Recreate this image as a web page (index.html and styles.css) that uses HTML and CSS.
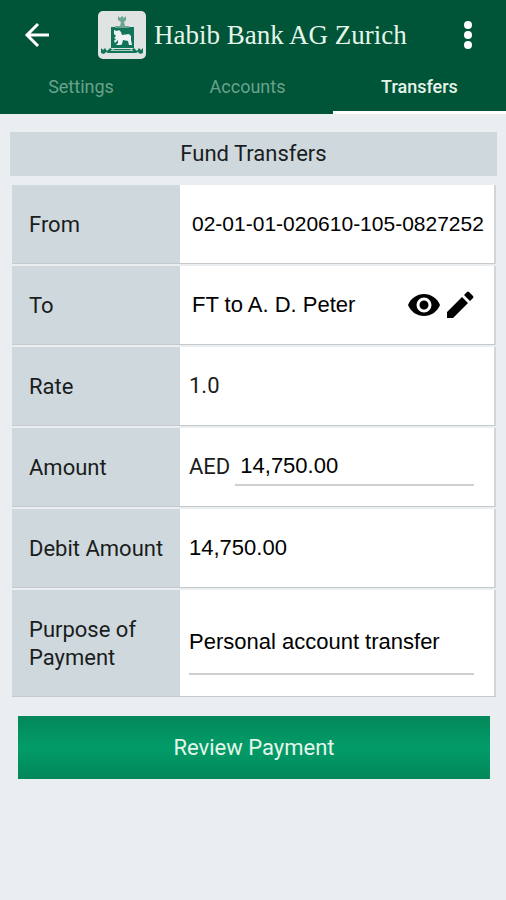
FILE: index.html
```html
<!DOCTYPE html>
<html lang="en">
<head>
<meta charset="utf-8">
<meta name="viewport" content="width=device-width, initial-scale=1">
<title>Fund Transfers</title>
<link rel="stylesheet" href="styles.css">
</head>
<body>
<header class="app-header">
  <div class="app-bar">
    <button class="icon-button back" type="button" aria-label="Back">
      <svg width="26" height="26" viewBox="0 0 26 26" fill="none" stroke="currentColor" stroke-width="3"><path d="M25 13H3M14 2L3 13l11 11"/></svg>
    </button>
    <svg class="logo" width="48" height="48" viewBox="0 0 48 48" aria-hidden="true">
      <rect width="48" height="48" rx="5" fill="#dfe3e2"/>
      <path d="M13 16h23v21H13z" fill="#12755a"/>
      <path d="M3 37l2 2 2-2 2 3 3-3 3 2 1-1h16l1 1 3-2 3 3 2-3 2 2 2-2v5l-3 1-2-2-2 1H10l-2-1-2 2-3-1z" fill="#12755a"/>
      <path d="M13 39.500h22" stroke="#a9cabf" stroke-width="1"/>
      <path d="M20 5l2 2 2-2 2 2 2-2v4l-2 2 1 4h4v2H17v-2h5l1-4-3-2z" fill="#6ba592"/>
      <path d="M16 19l3 1 2-1 2 2 1 3 7-1 2 2v4l1 5h-3l-1-4-5-1-1 4-1 1h-5l2-2v-3l-3 3-1-2 2-2-2-1 2-2-2-2z" fill="#eef3f1"/>
    </svg>
    <h1 class="brand">Habib Bank AG Zurich</h1>
    <button class="icon-button more" type="button" aria-label="More options">
      <svg width="10" height="28" viewBox="0 0 10 28" fill="currentColor"><circle cx="5" cy="4" r="4"/><circle cx="5" cy="14" r="4"/><circle cx="5" cy="24" r="4"/></svg>
    </button>
  </div>
  <nav class="tabs">
    <a class="tab" href="#settings">Settings</a>
    <a class="tab" href="#accounts">Accounts</a>
    <a class="tab active" href="#transfers" aria-current="page">Transfers</a>
  </nav>
</header>
<main class="page">
  <h2 class="page-title">Fund Transfers</h2>
  <form class="transfer">
    <div class="row">
      <span class="label">From</span>
      <div class="value inset account">02-01-01-020610-105-0827252</div>
    </div>
    <div class="row">
      <span class="label">To</span>
      <div class="value inset">
        <span class="grow">FT to A. D. Peter</span>
        <span class="actions">
          <button class="icon-button" type="button" aria-label="View payee">
            <svg width="32" height="24" viewBox="0 0 32 24"><path d="M0 12C3 5 9 1 16 1s13 4 16 11c-3 7-9 11-16 11S3 19 0 12z"/><circle cx="16" cy="12" r="6" fill="none" stroke="#fff" stroke-width="3"/></svg>
          </button>
          <button class="icon-button" type="button" aria-label="Edit payee">
            <svg width="28" height="28" viewBox="0 0 28 28"><path d="M1 21L16 6l6 6L7 27H1zM18 4l3-3q1-1 2 0l4 4q1 1 0 2l-3 3z"/></svg>
          </button>
        </span>
      </div>
    </div>
    <div class="row">
      <span class="label">Rate</span>
      <div class="value plain">1.0</div>
    </div>
    <div class="row">
      <label class="label" for="amount">Amount</label>
      <div class="value">
        <span class="plain">AED</span>
        <input class="field amount" id="amount" type="text" value="14,750.00">
      </div>
    </div>
    <div class="row">
      <span class="label">Debit Amount</span>
      <div class="value">14,750.00</div>
    </div>
    <div class="row tall">
      <label class="label" for="purpose">Purpose of Payment</label>
      <div class="value">
        <input class="field purpose" id="purpose" type="text" value="Personal account transfer">
      </div>
    </div>
    <button class="submit" type="submit">Review Payment</button>
  </form>
</main>
</body>
</html>
```
FILE: styles.css
```css
* {
  box-sizing: border-box;
}

body {
  margin: 0;
  min-height: 100vh;
  background: #ebeef1;
  color: #1a1d20;
  font-family: Roboto, "Liberation Sans", sans-serif;
  font-size: 22px;
  line-height: 28px;
}

button,
input {
  font: inherit;
  color: inherit;
}

.icon-button {
  display: flex;
  padding: 0;
  border: 0;
  background: none;
}

.app-header {
  background: #005437;
  color: #fff;
}

.app-bar {
  display: flex;
  align-items: center;
  height: 70px;
  padding: 0 33px 0 24px;
}

.logo {
  margin-left: 48px;
}

.brand {
  margin: 0 auto 0 8px;
  color: #e6f5ea;
  font-family: "Liberation Serif", serif;
  font-size: 27px;
  font-weight: 400;
  white-space: nowrap;
}

.tabs {
  display: grid;
  grid-template-columns: 162fr 171fr 173fr;
  height: 44px;
}

.tab {
  padding-top: 3px;
  border-bottom: 3px solid transparent;
  color: #69a38b;
  font-size: 18px;
  text-align: center;
  text-decoration: none;
}

.tab.active {
  border-color: #fff;
  color: #e6f5ea;
  font-weight: 500;
}

.page {
  padding: 18px 9px 18px 10px;
}

.page-title {
  margin: 0 0 9px;
  padding: 8px;
  background: #cfd8dd;
  font-size: 22px;
  font-weight: 400;
  text-align: center;
}

.transfer {
  display: flex;
  flex-direction: column;
  gap: 2px;
}

.row {
  display: grid;
  grid-template-columns: 168px 1fr;
  min-height: 79px;
  margin: 0 1px 0 2px;
  border-right: 2px solid #d2d5d7;
  border-bottom: 1px solid #c4c9cc;
  background: #fff;
}

.tall {
  min-height: 107px;
}

.label {
  display: flex;
  align-items: center;
  padding: 2px 10px 0 17px;
  background: #cfd8dd;
}

.value {
  display: flex;
  align-items: center;
  min-width: 0;
  padding: 0 20px 0 9px;
  color: #000;
  font-family: "Liberation Sans", Arial, sans-serif;
  white-space: nowrap;
}

.inset {
  padding-left: 12px;
}

.account {
  padding-right: 0;
  font-size: 21px;
}

.grow {
  flex: 1;
}

.actions {
  display: flex;
  align-items: center;
  gap: 6px;
}

.plain {
  color: #1a1d20;
  font-family: Roboto, sans-serif;
}

.field {
  flex: 1;
  min-width: 0;
  padding: 0;
  border: 0;
  border-bottom: 2px solid #cdd0d2;
  border-radius: 0;
  background: none;
  outline: 0;
}

.amount {
  height: 38px;
  margin-left: 5px;
  padding-left: 5px;
}

.purpose {
  height: 64px;
}

.submit {
  height: 63px;
  margin: 17px 7px 0 8px;
  border: 0;
  background: linear-gradient(#038759, #029c69 50%, #038759);
  color: #e6f5ea;
}
```
